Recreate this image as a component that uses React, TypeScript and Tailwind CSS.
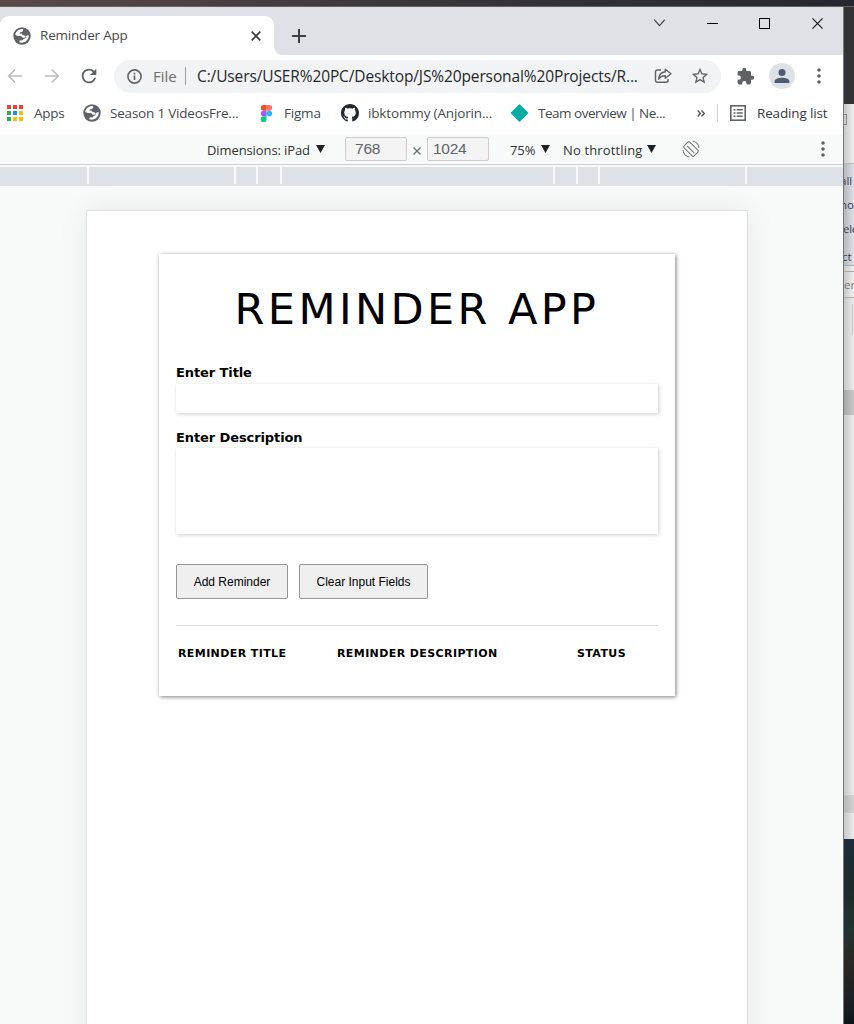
import React from "react";

const ui = "font-['Open_Sans','Noto_Sans',sans-serif]";

function Globe({ className }: { className: string }) {
  return (
    <svg className={className} viewBox="0 0 18 18">
      <circle cx="9" cy="9" r="8.7" fill="#5f6368" />
      <path
        d="M10.200 2.100C6.600 1.700 3 4 2.200 7.800L4.600 9H8.200L9.200 10.400 11.600 10.800 12.600 9.200 11 8.300 9.400 7.900 8.600 6.600 6.400 6.700 7.200 5.200 9.800 4.600z"
        fill="#fff"
      />
      <path
        d="M15.800 8.300L13.600 8.400 12.700 9.400 12.500 11.200 10.600 11.900 9.800 13.300 6.700 13.600 6.200 15.200C10.700 17 15.800 13.700 15.800 8.300z"
        fill="#fff"
      />
    </svg>
  );
}

function Arrow({ className }: { className: string }) {
  return (
    <svg className={className} viewBox="0 0 16 16" fill="none" stroke="#babcbe" strokeWidth="1.7">
      <path d="M15.2 8H2M8.2 1.5L1.7 8l6.5 6.5" />
    </svg>
  );
}

function Dots({ className }: { className: string }) {
  return (
    <svg className={className} viewBox="0 0 4 16" fill="#5f6368">
      <circle cx="2" cy="2" r="1.8" />
      <circle cx="2" cy="8" r="1.8" />
      <circle cx="2" cy="14" r="1.8" />
    </svg>
  );
}

function Caret({ className }: { className: string }) {
  return (
    <svg className={className} viewBox="0 0 9 8">
      <path d="M0 0h9L4.5 8z" fill="#202124" />
    </svg>
  );
}

function TabStrip() {
  return (
    <div className="flex h-12 bg-[#dee1e6]">
      <div className="mt-[9px] flex h-[39px] w-[274px] shrink-0 items-center rounded-t-[9px] bg-white">
        <Globe className="ml-[13px] h-[18px] w-[18px]" />
        <span className="ml-[9px] w-[92px] pb-px text-[13.5px] leading-5 tracking-[-0.2px] text-[#45494d]">Reminder App</span>
        <svg className="ml-[119px] h-[10px] w-[10px]" viewBox="0 0 10 10" stroke="#3c4043" strokeWidth="1.7">
          <path d="M.7.7l8.6 8.6M9.3.7L.7 9.3" />
        </svg>
      </div>
      <div className="mt-auto h-2 w-2 bg-white">
        <div className="h-2 w-2 rounded-bl-lg bg-[#dee1e6]" />
      </div>
      <svg className="mt-[22px] ml-[10px] h-[14px] w-[14px]" viewBox="0 0 14 14" stroke="#3c4043" strokeWidth="2">
        <path d="M7 0v14M0 7h14" />
      </svg>
      <div className="mt-[10px] ml-[348px] flex h-3 items-center">
        <svg className="h-[12px] w-[11px]" viewBox="0 0 11 12" fill="none" stroke="#3c4043" strokeWidth="1.1">
          <path d="M.3 2.7l5.2 6 5.2-6" />
        </svg>
        <div className="ml-[42px] h-px w-[11px] bg-black" />
        <div className="ml-[41px] h-[11px] w-[11px] border border-black" />
        <svg className="ml-[42px] h-[11px] w-[11px]" viewBox="0 0 12 12" stroke="#111" strokeWidth="1.2">
          <path d="M.5.5l11 11M11.5.5l-11 11" />
        </svg>
      </div>
    </div>
  );
}

function AddressBar() {
  return (
    <div className="flex h-[43px] items-center bg-white pb-px">
      <Arrow className="ml-[7px] h-4 w-4" />
      <Arrow className="ml-[21px] h-4 w-4 rotate-180" />
      <svg className="ml-[18px] h-[22px] w-[22px]" viewBox="0 0 24 24" fill="#5f6368">
        <path d="M17.65 6.35A7.958 7.958 0 0 0 12 4a8 8 0 1 0 7.73 10h-2.08A5.99 5.99 0 0 1 12 18a6 6 0 1 1 0-12c1.66 0 3.14.69 4.22 1.78L13 11h7V4z" />
      </svg>
      <div className="ml-[14px] flex h-[33px] w-[607px] items-center rounded-full bg-[#f1f3f4]">
        <svg className="ml-[13px] h-[15px] w-[15px]" viewBox="0 0 15 15" fill="none" stroke="#5f6368" strokeWidth="1.6">
          <circle cx="7.5" cy="7.5" r="6.6" />
          <path d="M7.5 6.5v4.4M7.5 3.8v1.6" />
        </svg>
        <span className="ml-[11px] w-[26px] text-[15px] leading-5 text-[#6b6f73]">File</span>
        <div className="ml-[6px] h-[18px] w-px bg-[#9aa0a6]" />
        <span className="ml-[11px] w-[446px] text-[15.5px] leading-5 tracking-[-0.12px] whitespace-nowrap text-[#26282b]">
          C:/Users/USER%20PC/Desktop/JS%20personal%20Projects/R...
        </span>
        <svg className="ml-[11px] h-4 w-[18px]" viewBox="0 0 18 16" fill="none" stroke="#5f6368" strokeWidth="1.4" strokeLinejoin="round">
          <path d="M7 2H3.500Q1.500 2 1.500 4v8.300q0 2 2 2h8.600q2 0 2-2V11" />
          <path d="M11.300 1.200L17 5.700l-5.700 4.500V7.700C8 7.600 6 8.700 4.700 11.200c.2-4 2.300-7.100 6.600-7.500z" />
        </svg>
        <svg className="ml-[18px] h-5 w-5" viewBox="0 0 24 24" fill="#5f6368">
          <path d="M22 9.24l-7.19-.62L12 2 9.19 8.63 2 9.24l5.46 4.73L5.82 21 12 17.27 18.18 21l-1.63-7.03zM12 15.4l-3.76 2.27 1-4.28-3.32-2.88 4.38-.38L12 6.1l1.71 4.04 4.38.38-3.32 2.88 1 4.28z" />
        </svg>
      </div>
      <svg className="ml-[15px] h-[19px] w-[19px]" viewBox="0 0 24 24" fill="#5f6368">
        <path d="M20.5 11H19V7c0-1.1-.9-2-2-2h-4V3.5a2.5 2.5 0 0 0-5 0V5H4c-1.1 0-1.99.9-1.99 2v3.8H3.5a2.7 2.7 0 0 1 0 5.4H2V20c0 1.1.9 2 2 2h3.8v-1.5a2.7 2.7 0 0 1 5.4 0V22H17c1.1 0 2-.9 2-2v-4h1.500a2.500 2.500 0 0 0 0-5z" />
      </svg>
      <div className="ml-[14px] flex h-[26px] w-[26px] items-center justify-center rounded-full bg-[#dee1e6]">
        <svg className="h-[15px] w-[16px]" viewBox="0 0 16 15" fill="#4d5b73">
          <circle cx="8" cy="3.6" r="3.5" />
          <path d="M.6 14v-1.700C.6 9.800 4.700 8.700 8 8.700s7.400 1.100 7.400 3.600V14z" />
        </svg>
      </div>
      <Dots className="mr-[22px] ml-auto h-4 w-1" />
    </div>
  );
}

const appColors = [
  "bg-[#ea4335]", "bg-[#ea4335]", "bg-[#ea4335]",
  "bg-[#34a853]", "bg-[#1a8cff]", "bg-[#fbbc04]",
  "bg-[#34a853]", "bg-[#fbbc04]", "bg-[#fbbc04]",
];

function Bookmarks() {
  return (
    <div className="flex h-9 items-start bg-white pt-[5px] text-[13.5px] leading-5 whitespace-nowrap text-[#45494d]">
      <div className="mt-[2px] ml-[7px] grid h-4 w-4 grid-cols-3 gap-[2px]">
        {appColors.map((color, i) => (
          <div key={i} className={color} />
        ))}
      </div>
      <span className="ml-[11px] w-[32px] tracking-[-0.3px]">Apps</span>
      <Globe className="mt-px ml-[17px] h-[18px] w-[18px]" />
      <span className="ml-[9px] w-[130px] tracking-[-0.2px]">Season 1 VideosFre...</span>
      <svg className="mt-[2px] ml-[20px] h-[17px] w-[13px]" viewBox="0 0 12 18">
        <path d="M3 0h3v6H3a3 3 0 0 1 0-6z" fill="#f24e1e" />
        <path d="M6 0h3a3 3 0 0 1 0 6H6z" fill="#ff7262" />
        <path d="M3 6h3v6H3a3 3 0 0 1 0-6z" fill="#a259ff" />
        <circle cx="9" cy="9" r="3" fill="#1abcfe" />
        <path d="M3 12h3v3a3 3 0 1 1-3-3z" fill="#0acf83" />
      </svg>
      <span className="ml-[11px] w-[39px] tracking-[-0.2px]">Figma</span>
      <svg className="mt-px ml-[18px] h-[18px] w-[18px]" viewBox="0 0 16 16" fill="#24292f">
        <path d="M8 0C3.58 0 0 3.58 0 8c0 3.54 2.29 6.53 5.47 7.59.4.07.55-.17.55-.38 0-.19-.01-.82-.01-1.49-2.01.37-2.53-.49-2.69-.94-.09-.23-.48-.94-.82-1.130-.28-.15-.68-.52-.01-.53.63-.01 1.080.58 1.230.82.72 1.210 1.870.87 2.330.66.07-.52.28-.87.51-1.070-1.780-.2-3.640-.89-3.640-3.950 0-.87.31-1.590.82-2.150-.08-.2-.36-1.020.08-2.120 0 0 .67-.21 2.200.82.64-.18 1.320-.27 2-.27s1.360.09 2 .27c1.530-1.040 2.200-.82 2.200-.82.44 1.100.16 1.920.08 2.120.51.56.82 1.270.82 2.150 0 3.070-1.870 3.750-3.650 3.950.29.25.54.73.54 1.480 0 1.070-.01 1.930-.01 2.200 0 .21.15.46.55.38A8.010 8.010 0 0 0 16 8c0-4.420-3.580-8-8-8z" />
      </svg>
      <span className="ml-[9px] w-[125px] tracking-[-0.15px]">ibktommy (Anjorin...</span>
      <svg className="mt-px ml-[17px] h-[18px] w-[19px]" viewBox="0 0 19 18">
        <path d="M9.500 1L17.500 9l-8 8-8-8z" fill="#05ada3" stroke="#05ada3" strokeWidth="1.500" strokeLinejoin="round" />
      </svg>
      <span className="ml-[9px] w-[129px] tracking-[-0.5px]">Team overview | Ne...</span>
      <svg className="mt-[7px] ml-[30px] h-[7px] w-[8px]" viewBox="0 0 8 7" fill="none" stroke="#505458" strokeWidth="1.400">
        <path d="M.7.5l2.700 3L.7 6.500M4.500.5l2.700 3-2.700 3" />
      </svg>
      <div className="mt-px ml-[12px] h-[18px] w-px bg-[#cfd1d5]" />
      <svg className="mt-[2px] ml-[12px] h-4 w-4" viewBox="0 0 16 16" fill="none" stroke="#5f6368" strokeWidth="1.600">
        <rect x=".8" y=".8" width="14.400" height="14.400" />
        <path d="M3.500 4.700h2M3.500 8h2M3.500 11.300h2M6.700 4.700h6M6.700 8h6M6.700 11.300h6" />
      </svg>
      <span className="ml-[11px] tracking-[-0.15px] text-[#36393c]">Reading list</span>
    </div>
  );
}

function DeviceToolbar() {
  return (
    <div className="flex h-[31px] items-start border-b border-[#cbced6] bg-[#f8faf9] text-[13px] leading-5 whitespace-nowrap text-[#303134]">
      <span className="mt-[6px] ml-[207px] w-[104px] tracking-[-0.1px]">Dimensions: iPad</span>
      <Caret className="mt-[11px] ml-[5px] h-2 w-[9px]" />
      <div className="mt-[3px] ml-[20px] h-6 w-[62px] rounded-[2px] border border-[#ccc] bg-[#f4f4f4] pl-[9px] font-['Liberation_Sans',sans-serif] text-[15.5px] leading-[22px] tracking-[-0.2px] text-[#5f6368]">
        768
      </div>
      <svg className="mt-[13px] ml-[6px] h-[8px] w-[8px]" viewBox="0 0 8 8" stroke="#6e7175" strokeWidth="1.300">
        <path d="M.5.5l7 7M7.500.5l-7 7" />
      </svg>
      <div className="mt-[3px] ml-[6px] h-6 w-[62px] rounded-[2px] border border-[#ccc] bg-[#f4f4f4] pl-[5px] font-['Liberation_Sans',sans-serif] text-[15.5px] leading-[22px] tracking-[-0.3px] text-[#5f6368]">
        1024
      </div>
      <span className="mt-[6px] ml-[21px] w-[27px] tracking-[-0.1px]">75%</span>
      <Caret className="mt-[11px] ml-[4px] h-2 w-[9px]" />
      <span className="mt-[6px] ml-[13px] w-[80px] tracking-[0.15px]">No throttling</span>
      <Caret className="mt-[11px] ml-[4px] h-2 w-[9px]" />
      <svg className="mt-[6px] ml-[26px] h-[18px] w-[18px]" viewBox="0 0 18 18" fill="none" stroke="#777a7d" strokeWidth="1.100">
        <rect x="5" y="2" width="8" height="14" rx="1" transform="rotate(-45 9 9)" />
        <path d="M5.200 6l7.200 7.200M10.500 1A8 8 0 0 1 17 8M7.500 17A8 8 0 0 1 1 10" />
      </svg>
      <Dots className="mt-[7px] mr-[18px] ml-auto h-4 w-1" />
    </div>
  );
}

function Ruler() {
  const tick = "h-[17px] w-[2px] shrink-0 bg-[#f8faf9]";
  return (
    <div className="flex h-[21px] items-start border-t-2 border-[#f8faf9] bg-[#dee1e6]">
      <div className={`ml-[87px] ${tick}`} />
      <div className={`ml-[145px] ${tick}`} />
      <div className={`ml-[20px] ${tick}`} />
      <div className={`ml-[22px] ${tick}`} />
      <div className={`ml-[271px] ${tick}`} />
      <div className={`ml-[21px] ${tick}`} />
      <div className={`ml-[20px] ${tick}`} />
      <div className={`ml-[145px] ${tick}`} />
    </div>
  );
}

function ReminderCard() {
  const field = "block w-[482px] resize-none bg-white shadow-[1px_1px_4px_rgba(0,0,0,0.2)] outline-none";
  const label = "block text-[13px] leading-4 font-bold tracking-[-0.1px]";
  const button =
    "h-[35px] rounded-[2px] border border-[#959595] bg-[#efefef] font-['Liberation_Sans',sans-serif] text-[12px] text-black";
  return (
    <div className="mx-auto mt-[43px] flex h-[442px] w-[516px] flex-col bg-white px-[17px] font-['Verdana','DejaVu_Sans',sans-serif] text-black shadow-[1px_1px_4px_rgba(0,0,0,0.5)]">
      <h1 className="mt-[30px] w-[482px] text-center text-[43px] leading-[50px] tracking-[3.4px] whitespace-nowrap">REMINDER APP</h1>
      <label className={`mt-[31px] ${label}`}>Enter Title</label>
      <input className={`mt-[3px] h-[29px] ${field}`} />
      <label className={`mt-[17px] ${label}`}>Enter Description</label>
      <textarea className={`mt-[2px] h-[86px] ${field}`} />
      <div className="mt-[30px] flex gap-[11px]">
        <button className={`w-[112px] ${button}`}>Add Reminder</button>
        <button className={`w-[129px] ${button}`}>Clear Input Fields</button>
      </div>
      <div className="mt-[26px] flex border-t border-[#dcdcdc] pt-[20px] text-[11px] leading-4 font-bold tracking-[0.4px] whitespace-nowrap">
        <span className="ml-[2px] w-[159px]">REMINDER TITLE</span>
        <span className="w-[240px]">REMINDER DESCRIPTION</span>
        <span>STATUS</span>
      </div>
    </div>
  );
}

function BackgroundWindow() {
  return (
    <div className="flex w-[11px] shrink-0 flex-col overflow-hidden border-l border-[#77797b] bg-[#333335] text-[11.5px] leading-4 text-[#3c3d52]">
      <div className="h-[97px] shrink-0" />
      <div className="h-[60px] shrink-0 border-b border-[#bbb] bg-linear-to-r from-[#c8c8c8] to-[#f0f0f0] pt-[10px]">
        <div className="h-[11px] w-[3px] border border-l-0 border-[#888]" />
      </div>
      <div className="flex h-[102px] shrink-0 flex-col border-b border-[#aaa] bg-linear-to-r from-[#b5b8be] to-[#dee1e6]">
        <span className="mt-[9px] -ml-[4px]">all</span>
        <span className="mt-[8px] -ml-[4px]">no</span>
        <span className="mt-[8px] -ml-[1px] tracking-[-0.3px]">ele</span>
        <span className="mt-[12px] -ml-[2px]">ct</span>
      </div>
      <div className="h-[32px] shrink-0 border-b border-[#aaa] bg-linear-to-r from-[#c8c8c8] to-[#f1f1f1]">
        <div className="mt-[5px] border-t border-[#aaa] pt-[5px] text-[#777]">er</div>
      </div>
      <div className="h-[92px] shrink-0 bg-linear-to-r from-[#c7c7c7] to-[#ededed] pt-[6px]">
        <div className="ml-[8px] h-[31px] w-px bg-[#c4c4c4]" />
      </div>
      <div className="h-[25px] shrink-0 bg-linear-to-r from-[#a8a8a8] to-[#c7c7c7]" />
      <div className="h-[380px] shrink-0 bg-linear-to-r from-[#c7c7c7] to-[#ededed]" />
      <div className="h-[18px] shrink-0 bg-linear-to-r from-[#b8b8b8] to-[#d2d2d2]" />
      <div className="h-[26px] shrink-0 bg-linear-to-r from-[#c7c7c7] to-[#eee]" />
      <div className="h-[50px] shrink-0 bg-linear-to-b from-[#1b2b3a] to-[#1d2b2a]" />
      <div className="h-[80px] shrink-0 bg-linear-to-b from-[#1d2b2a] via-[#213432] to-[#2a2420]" />
      <div className="flex-1 bg-linear-to-b from-[#2a2420] via-[#1b2126] to-[#0e1519]" />
    </div>
  );
}

export default function App() {
  return (
    <div className={`flex h-[1024px] w-[854px] flex-col overflow-hidden ${ui}`}>
      <div className="h-[7px] shrink-0 border-b border-[#66605f] bg-linear-to-r from-[#5b4948] via-[#39363c] to-[#25282e]" />
      <div className="flex min-h-0 flex-1">
        <div className="flex w-[843px] shrink-0 flex-col bg-[#f8faf9]">
          <TabStrip />
          <AddressBar />
          <Bookmarks />
          <DeviceToolbar />
          <Ruler />
          <div className="flex-1 overflow-hidden pt-[24px] pl-[86px]">
            <div className="h-[900px] w-[662px] border border-[#dedfe0] bg-white shadow-[0_0_30px_rgba(0,0,0,0.07)]">
              <ReminderCard />
            </div>
          </div>
        </div>
        <BackgroundWindow />
      </div>
    </div>
  );
}
